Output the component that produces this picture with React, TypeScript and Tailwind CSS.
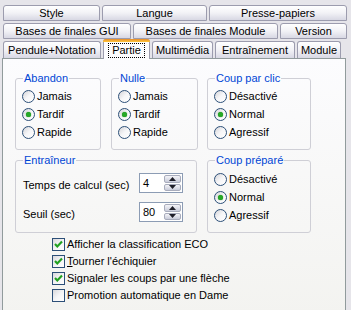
import type { ReactNode } from "react";

type Tab = { label: string; w: string };

const row1: Tab[] = [
  { label: "Style", w: "w-[97px]" },
  { label: "Langue", w: "w-[105px]" },
  { label: "Presse-papiers", w: "w-[138px]" },
];

const row2: Tab[] = [
  { label: "Bases de finales GUI", w: "w-[128px]" },
  { label: "Bases de finales Module", w: "w-[145px]" },
  { label: "Version", w: "w-[67px]" },
];

const TabButton = ({ label, w, bottom }: Tab & { bottom?: boolean }) => (
  <div
    className={`${w} flex h-full items-center justify-center rounded-t-[3px] border border-[#9c9cae] bg-linear-to-b from-white via-[#f2f2f6] to-[#d8d8e4] leading-[13px] ${
      bottom ? "border-b-0" : ""
    }`}
  >
    {label}
  </div>
);

const Radio = ({ label, checked }: { label: string; checked?: boolean }) => (
  <div className="flex h-[18px] items-center">
    <span className="flex h-[13px] w-[13px] items-center justify-center rounded-full border border-[#2c4f78] bg-linear-to-br from-[#d4d4d8] via-[#f6f6f8] to-white">
      {checked && <span className="h-[5px] w-[5px] rounded-full bg-[#27a827] shadow-[0_0_1px_#0a7a0a]" />}
    </span>
    <span className="ml-[2px] leading-[13px]">{label}</span>
  </div>
);

const Check = ({ children, checked }: { children: ReactNode; checked?: boolean }) => (
  <div className="flex h-[17px] items-center">
    <span className="flex h-[13px] w-[13px] items-center justify-center border border-[#2c4f78] bg-linear-to-br from-[#d8d8dc] via-[#f4f4f6] to-white">
      {checked && (
        <svg width="9" height="9" viewBox="0 0 9 9">
          <path d="M1 4 L3.3 6.4 L8 1.6" fill="none" stroke="#21a121" strokeWidth="2.2" />
        </svg>
      )}
    </span>
    <span className="ml-[2px] leading-[13px]">{children}</span>
  </div>
);

const Group = ({ title, className, children }: { title: string; className: string; children: ReactNode }) => (
  <fieldset className={`rounded-[3px] border border-[#cfcfd6] ${className}`}>
    <legend className="ml-[7px] px-[1px] leading-[13px] text-[#0046d5]">{title}</legend>
    {children}
  </fieldset>
);

const Arrow = ({ up }: { up?: boolean }) => (
  <svg width="7" height="4" viewBox="0 0 7 4">
    <path d={up ? "M0 4 L3.5 0 L7 4 Z" : "M0 0 L3.5 4 L7 0 Z"} fill="#1e1e28" />
  </svg>
);

const Spin = ({ value }: { value: string }) => (
  <div className="flex h-[20px] w-[44px] items-stretch border border-[#8c9cb4] bg-white">
    <span className="flex-1 pl-[3px] pt-[2px] leading-[14px]">{value}</span>
    <div className="my-[1px] mr-[1px] flex w-[17px] flex-col gap-[1px]">
      <div className="flex flex-1 items-center justify-center rounded-[2px] border border-[#a8acbc] bg-linear-to-b from-[#f4f4f8] to-[#c9ccda]">
        <Arrow up />
      </div>
      <div className="flex flex-1 items-center justify-center rounded-[2px] border border-[#a8acbc] bg-linear-to-b from-[#f4f4f8] to-[#c9ccda]">
        <Arrow />
      </div>
    </div>
  </div>
);

export default function App() {
  return (
    <div className="h-[310px] w-[351px] overflow-hidden bg-[#e6e5ea] font-['Liberation_Sans',Arial,sans-serif] text-[11px] text-black">
      <div className="pl-[3px] pt-[5px]">
        <div className="flex h-[16px] gap-[2px]">
          {row1.map((t) => (
            <TabButton key={t.label} {...t} />
          ))}
        </div>
        <div className="mt-[2px] flex h-[16px] gap-[2px]">
          {row2.map((t) => (
            <TabButton key={t.label} {...t} />
          ))}
        </div>
        <div className="relative z-10 mt-[2px] flex h-[17px] items-end gap-[2px]">
          <TabButton label="Pendule+Notation" w="w-[98px]" bottom />
          <div className="-mb-px flex h-[20px] w-[47px] flex-col rounded-t-[3px] border border-b-0 border-[#9c9cae] bg-[#fcfcfe]">
            <div className="-mx-px -mt-px h-[3px] rounded-t-[3px] bg-linear-to-b from-[#e68b2c] to-[#ffc73c]" />
            <div className="flex flex-1 items-start justify-center pt-[1px]">
              <span className="border border-dotted border-black px-[3px] leading-[13px]">Partie</span>
            </div>
          </div>
          <TabButton label="Multimédia" w="w-[61px]" bottom />
          <TabButton label="Entraînement" w="w-[80px]" bottom />
          <TabButton label="Module" w="w-[44px]" bottom />
        </div>
      </div>

      <div className="ml-[2px] h-[260px] w-[344px] border border-[#919b9c] bg-linear-to-b from-[#fcfcfe] to-[#f3f3f0] pl-[12px] pt-[13px]">
        <div className="flex">
          <Group title="Abandon" className="h-[78px] w-[86px]">
            <div className="pl-[6px] pt-[2px]">
              <Radio label="Jamais" />
              <Radio label="Tardif" checked />
              <Radio label="Rapide" />
            </div>
          </Group>
          <Group title="Nulle" className="ml-[10px] h-[78px] w-[87px]">
            <div className="pl-[6px] pt-[2px]">
              <Radio label="Jamais" />
              <Radio label="Tardif" checked />
              <Radio label="Rapide" />
            </div>
          </Group>
          <Group title="Coup par clic" className="ml-[9px] h-[78px] w-[104px]">
            <div className="pl-[6px] pt-[2px]">
              <Radio label="Désactivé" />
              <Radio label="Normal" checked />
              <Radio label="Agressif" />
            </div>
          </Group>
        </div>

        <div className="mt-[4px] flex">
          <Group title="Entraîneur" className="h-[79px] w-[182px]">
            <div className="flex flex-col gap-[9px] pl-[7px] pt-[6px]">
              <div className="flex items-center">
                <span className="w-[116px] pt-[4px] leading-[13px]">Temps de calcul (sec)</span>
                <Spin value="4" />
              </div>
              <div className="flex items-center">
                <span className="w-[116px] pt-[4px] leading-[13px]">Seuil (sec)</span>
                <Spin value="80" />
              </div>
            </div>
          </Group>
          <Group title="Coup préparé" className="ml-[10px] h-[79px] w-[104px]">
            <div className="pl-[6px] pt-[3px]">
              <Radio label="Désactivé" />
              <Radio label="Normal" checked />
              <Radio label="Agressif" />
            </div>
          </Group>
        </div>

        <div className="ml-[37px] mt-[3px]">
          <Check checked>Afficher la classification ECO</Check>
          <Check checked>
            <span className="underline">T</span>ourner l'échiquier
          </Check>
          <Check checked>Signaler les coups par une flèche</Check>
          <Check>Promotion automatique en Dame</Check>
        </div>
      </div>
    </div>
  );
}
